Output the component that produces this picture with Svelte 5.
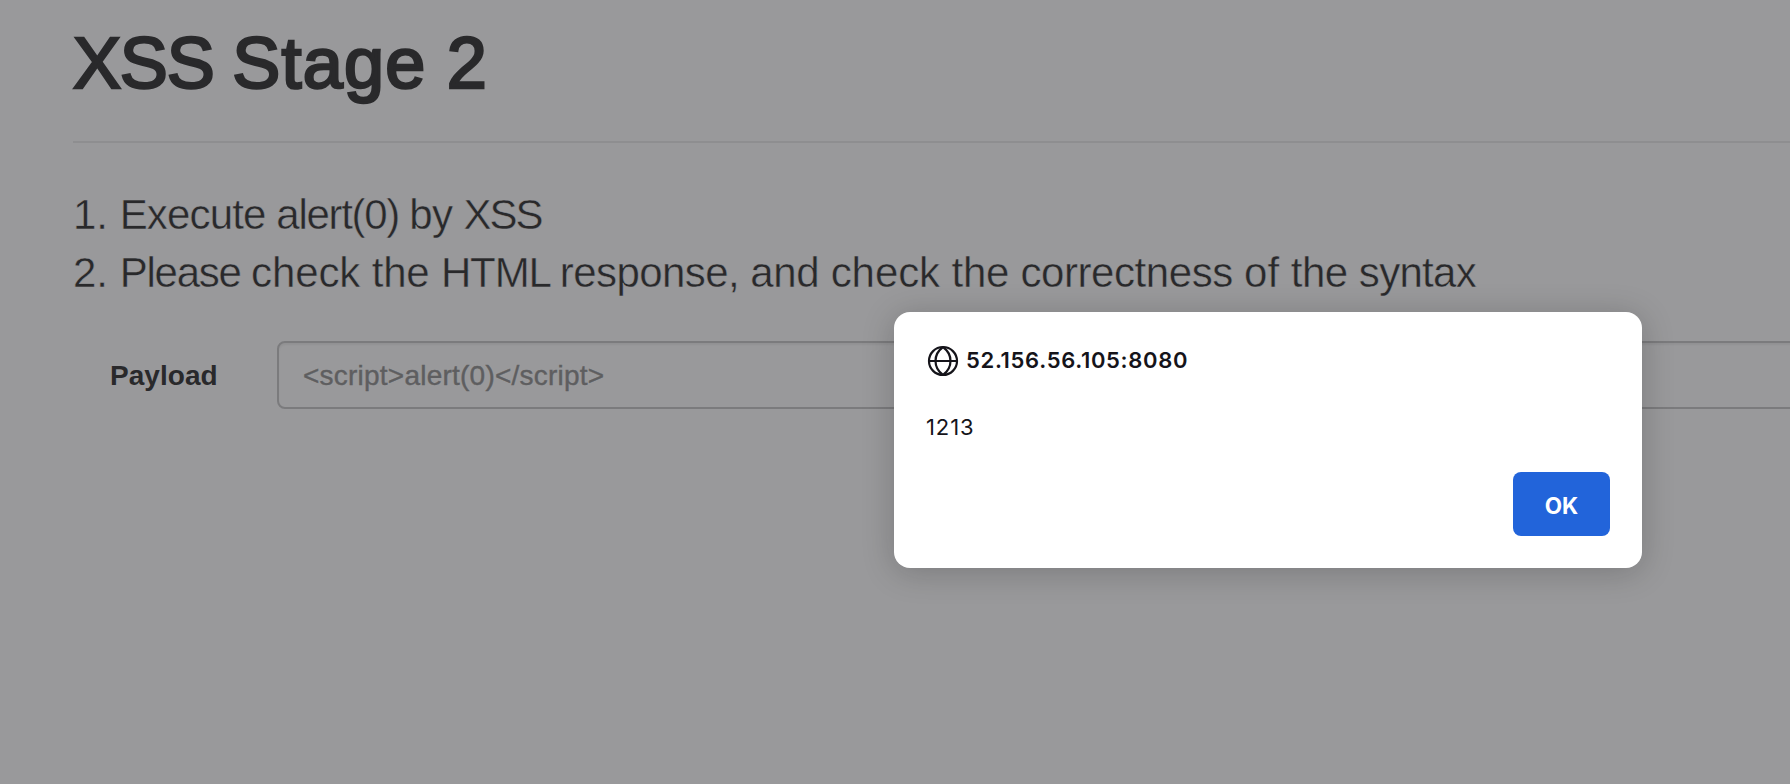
<script>
  const heading = [['XSS ', -1.2], ['Stage', 1.2], [' 2', 0.2]];
  const steps = [
    [['Execute', -0.85], ['alert(0)', -1.3], ['by', -0.67], ['XSS', -1.9]],
    [
      ['Please', -1.25], ['check', -0.1], ['the', -0.25], ['HTML', -1.12],
      ['response,', -0.56], ['and', -0.33], ['check', -0.1], ['the', -0.3],
      ['correctness', -0.42], ['of', 0], ['the', -0.5], ['syntax', -0.7]
    ]
  ];
  const placeholder = '<script>alert(0)<' + '/script>';
</script>

<div class="page">
  <main>
    <h1>{#each heading as [word, tracking]}<span style:letter-spacing="{tracking}px">{word}</span>{/each}</h1>
    <div class="steps">
      {#each steps as step, i}
        <p>{i + 1}. {#each step as [word, tracking]}<span style:letter-spacing="{tracking}px">{word + ' '}</span>{/each}</p>
      {/each}
    </div>
    <div class="form">
      <label for="payload">Payload</label>
      <input id="payload" type="text" {placeholder} />
    </div>
  </main>

  <div class="dialog" role="alertdialog" aria-labelledby="origin">
    <div class="title">
      <svg width="32" height="32" viewBox="0 0 32 32" fill="none" stroke="#15141a" stroke-width="2.2">
        <circle cx="16" cy="16" r="14" />
        <path d="M2 16H30M16 2C6 9.5 6 22.5 16 30M16 2C26 9.5 26 22.5 16 30" />
      </svg>
      <span id="origin">52.156.56.105:8080</span>
    </div>
    <div class="message">1213</div>
    <div class="actions"><button>OK</button></div>
  </div>
</div>

<style>
  :global(body) {
    margin: 0;
    background: #99999b;
  }
  .page {
    position: relative;
    height: 784px;
    overflow: hidden;
    background: #99999b;
    color: #29292b;
    font-family: "Liberation Sans", Arial, sans-serif;
  }
  main {
    padding: 24px 0 0 73px;
  }
  h1 {
    margin: 0;
    height: 117px;
    border-bottom: 2px solid #8e8e90;
    font-size: 72px;
    line-height: 79px;
    font-weight: 400;
    white-space: pre;
    -webkit-text-stroke: 2.6px #29292b;
  }
  .steps {
    padding-top: 43px;
    font-size: 42px;
    line-height: 58px;
    -webkit-text-stroke: 0.45px #99999b;
  }
  p {
    margin: 0;
    white-space: pre;
  }
  .form {
    display: flex;
    margin-top: 39px;
    align-items: center;
    font-size: 28px;
  }
  label {
    box-sizing: border-box;
    width: 204px;
    padding: 2px 0 0 37px;
    font-weight: 700;
    letter-spacing: 0.05px;
    flex: none;
  }
  input {
    box-sizing: border-box;
    flex: none;
    width: 1600px;
    height: 68px;
    padding: 2px 24px 0;
    border: 2px solid #7b7b7d;
    border-radius: 8px;
    background: transparent;
    box-shadow: inset 0 2px 2px rgba(0, 0, 0, 0.05);
    font: 28px "Liberation Sans", Arial, sans-serif;
    letter-spacing: 0.23px;
    outline: none;
  }
  input::placeholder {
    color: #5e5e60;
    opacity: 1;
    -webkit-text-stroke: 0.4px #5e5e60;
  }
  .dialog {
    position: absolute;
    left: 894px;
    top: 312px;
    box-sizing: border-box;
    width: 748px;
    height: 256px;
    padding: 32px;
    border-radius: 16px;
    background: #fff;
    box-shadow: 0 4px 32px rgba(12, 12, 13, 0.22);
    color: #15141a;
    font: 22px/32px Inter, sans-serif;
  }
  .title {
    display: flex;
    align-items: center;
    gap: 7px;
    height: 34px;
    font-weight: 600;
    letter-spacing: 0.67px;
  }
  .title svg {
    flex: none;
    margin-left: 1px;
  }
  .title span {
    padding-bottom: 2px;
  }
  .message {
    margin-top: 33px;
    letter-spacing: 0.9px;
  }
  .actions {
    display: flex;
    justify-content: flex-end;
    margin-top: 29px;
  }
  button {
    width: 97px;
    height: 64px;
    padding: 2px 0 0;
    border: 0;
    border-radius: 8px;
    background: #2264da;
    color: #fff;
    font: 700 22.5px Inter, sans-serif;
  }
</style>
